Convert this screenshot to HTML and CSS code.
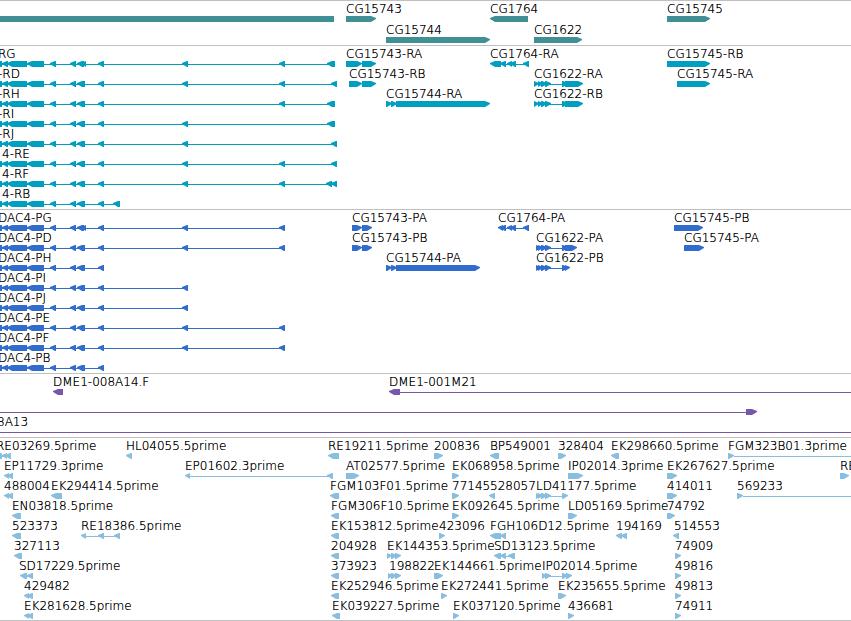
FILE: index.html
```
<!DOCTYPE html>
<html lang="en">

<head>
    <meta charset="UTF-8">
    <meta name="viewport" content="width=device-width, initial-scale=1.0">
    <title>genome tracks</title>
    <link rel="stylesheet" href="styles.css">
</head>

<body>
    <main id="browser">
        <section class="track genes" id="genes"></section>
        <section class="track transcripts" id="transcripts"></section>
        <section class="track proteins" id="proteins"></section>
        <section class="track clones" id="clones"></section>
        <section class="track ests" id="ests"></section>
    </main>
    <script src="script.js"></script>
</body>

</html>
```

FILE: styles.css
```
body {
    margin: 0;
    background: #fff;
    color: #000;
    font-family: "DejaVu Sans", sans-serif;
    font-size: 12px;
    font-weight: 200;
    line-height: 16px;
}

#browser {
    overflow: hidden;
    border-bottom: 1px solid #c0c0c0;
}

.track {
    padding-bottom: 3px;
    border-top: 1px solid #c0c0c0;
}

.row {
    height: 20px;
}

.labels {
    position: relative;
    height: 15px;
}

.label {
    position: absolute;
    top: 0;
    white-space: nowrap;
    /* darkens the thin strokes */
    text-shadow: 0 0 0 #000;
}

.glyphs {
    display: block;
    width: 100%;
    height: 6px;
    fill: currentColor;
}

.genes,
.ests {
    padding-bottom: 2px;
}

.genes .row {
    height: 21px;
}

.genes .glyphs {
    color: #3f8f94;
}

.transcripts .glyphs {
    color: #009ebf;
}

.proteins .glyphs {
    color: #316dce;
}

.clones .glyphs {
    color: #7758a8;
}

.ests .glyphs {
    color: #8abedf;
}
```

FILE: script.js
```
const SVG = 'http://www.w3.org/2000/svg';

// feature: [label, x, strand, blocks], blocks are "start:end" separated by spaces
// strand is < or >, a block that starts with | has no arrow tip
const HEAD = '|-9:2 2:8 7:27 27:44 50:56 70:76 77:84 ';

const tracks = {
    genes: [
        [['', 0, '<', '|-9:334'], ['CG15743', 346, '>', '346:376'], ['CG1764', 490, '<', '490:528'], ['CG15745', 667, '>', '667:710']],
        [['CG15744', 386, '>', '386:490'], ['CG1622', 534, '>', '534:582']]
    ],
    transcripts: [
        [['RG', -2, '<', HEAD + '81:86 98:104 182:188 279:285 327:335'], ['CG15743-RA', 346, '>', '346:362 362:376'], ['CG1764-RA', 490, '<', '490:501 500:506 507:512 510:516 523:529'], ['CG15745-RB', 667, '>', '667:710']],
        [['-RD', -2, '<', HEAD + '79:85 98:104 182:188 279:285 331:337'], ['CG15743-RB', 349, '>', '349:362 362:376'], ['CG1622-RA', 534, '>', '534:539 538:543 541:547 545:551 562:568 565:583'], ['CG15745-RA', 677, '>', '677:710']],
        [['-RH', -2, '<', HEAD + '79:85 98:104 279:285 327:335'], ['CG15744-RA', 386, '>', '386:392 391:397 396:490'], ['CG1622-RB', 534, '>', '534:539 538:543 541:547 545:551 562:568 565:583']],
        [['-RI', -2, '<', HEAD + '79:85 98:104 182:188 327:335']],
        [['-RJ', -2, '<', HEAD + '79:85 98:104 182:188 331:337']],
        [['4-RE', 2, '<', HEAD + '79:85 98:104 182:188 279:285 331:337']],
        [['4-RF', 2, '<', HEAD + '79:85 98:104 182:188 279:285 326:332 331:337']],
        [['4-RB', 2, '<', HEAD + '79:85 98:104 113:120']]
    ],
    proteins: [
        [['DAC4-PG', -2, '<', HEAD + '81:86 98:104 182:188 279:285'], ['CG15743-PA', 352, '>', '352:362 362:372'], ['CG1764-PA', 498, '<', '498:503 500:506 507:512 510:516 523:529'], ['CG15745-PB', 674, '>', '674:703']],
        [['DAC4-PD', -2, '<', HEAD + '79:85 98:104 182:188 279:285'], ['CG15743-PB', 352, '>', '352:362 362:372'], ['CG1622-PA', 536, '>', '536:541 538:543 541:547 545:551 562:568 565:577'], ['CG15745-PA', 684, '>', '684:704']],
        [['DAC4-PH', -2, '<', HEAD + '79:85 98:104'], ['CG15744-PA', 386, '>', '386:392 391:397 396:480'], ['CG1622-PB', 536, '>', '536:541 538:543 541:547 545:551 562:568 565:570']],
        [['DAC4-PI', -2, '<', HEAD + '79:85 98:104 182:188']],
        [['DAC4-PJ', -2, '<', HEAD + '79:85 98:104 182:188']],
        [['DAC4-PE', -2, '<', HEAD + '79:85 98:104 182:188 279:285']],
        [['DAC4-PF', -2, '<', HEAD + '79:85 98:104 182:188 279:285']],
        [['DAC4-PB', -2, '<', HEAD + '79:85 98:104']]
    ],
    clones: [
        [['DME1-008A14.F', 53, '<', '53:63'], ['DME1-001M21', 389, '<', '389:400 4000:4010']],
        [['', 0, '>', '-20:-10 746:757']],
        [['8A13', -3, '<', '-20:-10 4000:4010']]
    ],
    ests: [
        [['RE03269.5prime', -4, '<', '-5:2 2:7 5:11'], ['HL04055.5prime', 126, '<', '126:132'], ['RE19211.5prime', 328, '<', '328:339'], ['200836', 434, '>', '434:443'], ['BP549001', 490, '<', '490:499'], ['328404', 558, '>', '558:566'], ['EK298660.5prime', 611, '<', '611:619'], ['FGM323B01.3prime', 728, '>', '728:734 4000:4010']],
        [['EP11729.3prime', 4, '<', '4:9 7:13'], ['EP01602.3prime', 185, '<', '185:190 327:333'], ['AT02577.5prime', 346, '>', '346:359'], ['EK068958.5prime', 452, '>', '452:459'], ['IP02014.3prime', 568, '>', '568:583'], ['EK267627.5prime', 667, '>', '667:677'], ['RE', 840, '>', '840:849']],
        [['488004', 4, '<', '4:9 7:13'], ['EK294414.5prime', 51, '<', '51:62'], ['FGM103F01.5prime', 330, '<', '330:339'], ['77145', 452, '>', '452:459'], ['528057', 490, '<', '489:495'], ['LD41177.5prime', 536, '>', '536:541 538:543 541:547 545:551 562:568'], ['414011', 667, '>', '667:677'], ['569233', 737, '>', '737:743 4000:4010']],
        [['EN03818.5prime', 12, '<', '12:21'], ['FGM306F10.5prime', 331, '<', '331:339'], ['EK092645.5prime', 452, '>', '452:459'], ['LD05169.5prime', 568, '>', '568:577'], ['74792', 667, '>', '667:675']],
        [['523373', 12, '<', '12:21'], ['RE18386.5prime', 81, '<', '81:86 98:104 114:120'], ['EK153812.5prime', 331, '<', '331:339'], ['423096', 439, '>', '439:445'], ['FGH106D12.5prime', 490, '<', '490:501 500:506'], ['194169', 616, '<', '616:622 621:627'], ['514553', 674, '<', '673:679']],
        [['327113', 14, '<', '14:22'], ['204928', 331, '<', '331:339'], ['EK144353.5prime', 387, '>', '387:392 391:397 395:401'], ['SD13123.5prime', 494, '<', '494:501 500:506 508:515'], ['74909', 675, '>', '675:681']],
        [['SD17229.5prime', 19, '<', '20:27 27:33'], ['373923', 331, '<', '331:339'], ['198822', 389, '>', '388:393 391:397 395:401'], ['EK144661.5prime', 434, '>', '434:443'], ['IP02014.5prime', 542, '>', '542:547 545:551 562:568 566:572'], ['49816', 675, '>', '675:681']],
        [['429482', 24, '<', '24:29 27:33'], ['EK252946.5prime', 331, '<', '331:339'], ['EK272441.5prime', 441, '>', '441:447'], ['EK235655.5prime', 558, '>', '558:566'], ['49813', 675, '>', '675:681']],
        [['EK281628.5prime', 24, '<', '24:29 27:33'], ['EK039227.5prime', 332, '<', '332:340'], ['EK037120.5prime', 453, '>', '453:459'], ['436681', 568, '>', '568:574'], ['74911', 675, '>', '675:681']]
    ]
};

function blockPath(start, end, strand, plain) {
    if (plain) {
        return `M${start} 0H${end}V6H${start}Z`;
    }
    const tip = 5;
    if (strand === '<') {
        return `M${start} 2V3L${start + tip} 6H${end}V0H${start + tip}Z`;
    }
    return `M${end} 2V3L${end - tip} 6H${start}V0H${end - tip}Z`;
}

function featurePaths(strand, text) {
    const blocks = text.trim().split(' ').map(b => ({
        plain: b[0] === '|',
        pos: b.replace('|', '').split(':').map(Number)
    }));
    const paths = blocks.map(b => blockPath(b.pos[0], b.pos[1], strand, b.plain));
    if (blocks.length > 1) {
        // thin line that joins the blocks
        const from = blocks[0].pos[1];
        const to = blocks[blocks.length - 1].pos[0] + 2;
        paths.push(`M${from} 3H${to}V4H${from}Z`);
    }
    return paths;
}

function renderRow(features) {
    const row = document.createElement('div');
    row.className = 'row';
    const labels = document.createElement('div');
    labels.className = 'labels';
    const svg = document.createElementNS(SVG, 'svg');
    svg.setAttribute('class', 'glyphs');
    for (const [name, x, strand, blocks] of features) {
        if (name) {
            const label = document.createElement('span');
            label.className = 'label';
            label.style.left = x + 'px';
            label.textContent = name;
            labels.appendChild(label);
        }
        for (const d of featurePaths(strand, blocks)) {
            const path = document.createElementNS(SVG, 'path');
            path.setAttribute('d', d);
            svg.appendChild(path);
        }
    }
    row.append(labels, svg);
    return row;
}

for (const id in tracks) {
    const track = document.getElementById(id);
    tracks[id].forEach(features => track.appendChild(renderRow(features)));
}
```
